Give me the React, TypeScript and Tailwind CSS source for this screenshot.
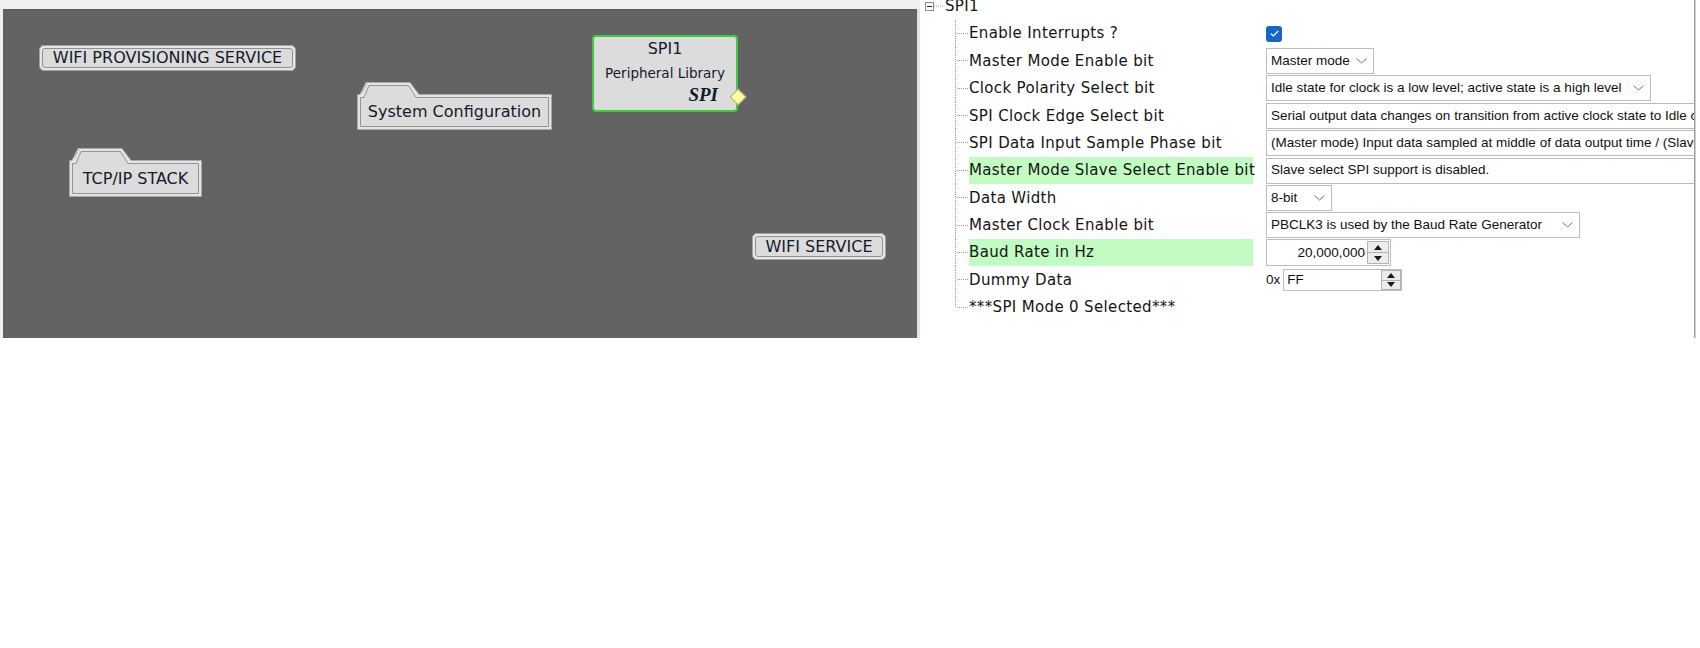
import React from "react";

function Pill({ label, className }: { label: string; className: string }) {
  return (
    <div className={`absolute rounded-[5px] border border-[#a3a3a3] bg-[#e6e6e6] p-[2px] ${className}`}>
      <div className="flex h-full items-center justify-center rounded-[3px] border border-[#919191] bg-[#dcdcdc] text-[16px] leading-none text-[#131a2c]">
        {label}
      </div>
    </div>
  );
}

function Folder({ label, w, h, className }: { label: string; w: number; h: number; className: string }) {
  const outer = `M0.5,${h - 0.5} V13.5 H3 L9,1.5 H53 L62,13.5 H${w - 0.5} V${h - 0.5} Z`;
  const inner = `M3.5,${h - 3.5} V16.5 H7 L12,4.5 H51.5 L59,16.5 H${w - 3.5} V${h - 3.5} Z`;
  return (
    <div className={`absolute ${className}`}>
      <svg className="absolute inset-0" width={w} height={h}>
        <path d={outer} fill="#e4e4e4" stroke="#a9a9a9" />
        <path d={inner} fill="#dcdcdc" stroke="#949494" />
        <line x1="5" y1="11" x2="10" y2="3" stroke="#8a8a8a" strokeDasharray="1 1" />
      </svg>
      <div className="relative flex h-full items-center justify-center pt-[13px] text-[16px] leading-none text-[#131a2c]">
        {label}
      </div>
    </div>
  );
}

function Connector({ last }: { last?: boolean }) {
  return (
    <svg width="49" height="27.4" className="shrink-0">
      <line x1="35.5" y1="0" x2="35.5" y2={last ? 14 : 27.4} stroke="#9a9a9a" strokeDasharray="1 1" />
      <line x1="37" y1="13.5" x2="48" y2="13.5" stroke="#9a9a9a" strokeDasharray="1 1" />
    </svg>
  );
}

function Chevron() {
  return (
    <svg width="11" height="6" className="shrink-0">
      <polyline points="0.5,0.5 5.5,5 10.5,0.5" fill="none" stroke="#707070" />
    </svg>
  );
}

function Combo({ text, className }: { text: string; className: string }) {
  return (
    <div className={`flex h-[26px] items-center justify-between border border-[#bcbcbc] bg-white pl-[4px] pr-[6px] ${className}`}>
      <span className="whitespace-nowrap">{text}</span>
      <Chevron />
    </div>
  );
}

function Field({ text }: { text: string }) {
  return (
    <div className="flex h-[26px] w-[460px] items-center border border-[#bcbcbc] bg-white pl-[4px]">
      <span className="whitespace-nowrap">{text}</span>
    </div>
  );
}

function SpinButtons({ className }: { className: string }) {
  return (
    <div className={`flex flex-col border border-[#b4b4b4] bg-[#ececec] ${className}`}>
      <div className="flex flex-1 items-center justify-center border-b border-[#b4b4b4]">
        <svg width="8" height="5"><polygon points="4,0 8,5 0,5" fill="#1a1a1a" /></svg>
      </div>
      <div className="flex flex-1 items-center justify-center">
        <svg width="8" height="5"><polygon points="0,0 8,0 4,5" fill="#1a1a1a" /></svg>
      </div>
    </div>
  );
}

function Row({ label, green, last, children }: { label: string; green?: boolean; last?: boolean; children?: React.ReactNode }) {
  return (
    <div className="flex h-[27.4px] items-stretch">
      <Connector last={last} />
      <div className={`flex w-[284px] shrink-0 items-center whitespace-nowrap ${green ? "bg-[#c2fcc2]" : ""}`}>{label}</div>
      <div className="ml-[13px] flex items-center font-['Liberation_Sans',sans-serif] text-[13.5px] tracking-normal text-[#111]">
        {children}
      </div>
    </div>
  );
}

export default function App() {
  return (
    <div className="h-[648px] w-[1700px] bg-white font-['DejaVu_Sans',sans-serif]">
      <div className="flex h-[338px]">
        {/* canvas */}
        <div className="flex w-[920px] shrink-0 bg-[#f0f0f0] pl-[3px] pt-[9px]">
          <div className="relative flex-1 border-t border-[#5a5a5a] bg-[#636363]">
            <Pill label="WIFI PROVISIONING SERVICE" className="left-[36px] top-[35px] h-[26px] w-[257px]" />
            <Folder label="TCP/IP STACK" w={133} h={50} className="left-[66px] top-[137px] h-[50px] w-[133px]" />
            <Folder label="System Configuration" w={195} h={49} className="left-[354px] top-[71px] h-[49px] w-[195px]" />
            <div className="absolute left-[589px] top-[25px] flex h-[77px] w-[146px] flex-col rounded-[4px] border-2 border-[#3ccb3c] bg-[#dcdcdc] text-[#131a2c]">
              <div className="mt-[3px] text-center text-[16px] leading-[18px]">SPI1</div>
              <div className="mt-[6px] text-center text-[13.5px] leading-[18px]">Peripheral Library</div>
              <div className="mt-[3px] pr-[18px] text-right font-['Liberation_Serif',serif] text-[19px] font-bold italic leading-[20px]">SPI</div>
              <div className="absolute right-[-8px] top-[54px] h-[12px] w-[12px] rotate-45 border border-[#a9a87a] bg-[#ffff9e]" />
            </div>
            <Pill label="WIFI SERVICE" className="left-[749px] top-[223px] h-[27px] w-[134px]" />
          </div>
          <div className="w-[3px] bg-[#dde4ec]" />
        </div>

        {/* properties tree */}
        <div className="w-[774px] shrink-0 overflow-hidden bg-white text-[15px] tracking-[0.35px] text-[#141414]">
          <div className="mt-[-7.5px]">
            <div className="flex h-[27.4px] items-center pl-[5px]">
              <div className="flex h-[9px] w-[9px] items-center justify-center border border-[#8c8c8c] bg-white">
                <div className="h-px w-[5px] bg-[#222]" />
              </div>
              <svg width="9" height="2" className="shrink-0">
                <line x1="0" y1="1" x2="9" y2="1" stroke="#9a9a9a" strokeDasharray="1 1" />
              </svg>
              <span className="ml-[2px]">SPI1</span>
            </div>
            <Row label="Enable Interrupts ?">
              <div className="flex h-[16px] w-[16px] items-center justify-center rounded-[3px] bg-[#1566c6]">
                <svg width="9" height="7"><polyline points="0.8,3.6 3.3,6 8.2,1" fill="none" stroke="#fff" strokeWidth="1.2" /></svg>
              </div>
            </Row>
            <Row label="Master Mode Enable bit">
              <Combo text="Master mode" className="w-[108px]" />
            </Row>
            <Row label="Clock Polarity Select bit">
              <Combo text="Idle state for clock is a low level; active state is a high level" className="w-[385px]" />
            </Row>
            <Row label="SPI Clock Edge Select bit">
              <Field text="Serial output data changes on transition from active clock state to Idle clock state" />
            </Row>
            <Row label="SPI Data Input Sample Phase bit">
              <Field text="(Master mode) Input data sampled at middle of data output time / (Slave mode) SMP bit must be cleared" />
            </Row>
            <Row label="Master Mode Slave Select Enable bit" green>
              <Field text="Slave select SPI support is disabled." />
            </Row>
            <Row label="Data Width">
              <Combo text="8-bit" className="w-[66px]" />
            </Row>
            <Row label="Master Clock Enable bit">
              <Combo text="PBCLK3 is used by the Baud Rate Generator" className="w-[314px]" />
            </Row>
            <Row label="Baud Rate in Hz" green>
              <div className="flex h-[27px] w-[125px] items-center border border-[#bcbcbc] bg-white pr-px">
                <span className="flex-1 pr-[2px] text-right">20,000,000</span>
                <SpinButtons className="h-[23px] w-[22px]" />
              </div>
            </Row>
            <Row label="Dummy Data">
              <span className="mr-[3px]">0x</span>
              <div className="flex h-[22px] w-[119px] items-center border border-[#bcbcbc] bg-white">
                <span className="flex-1 pl-[3px]">FF</span>
                <SpinButtons className="h-[20px] w-[20px]" />
              </div>
            </Row>
            <Row label="***SPI Mode 0 Selected***" last />
          </div>
        </div>

        <div className="w-px bg-[#9c9c9c]" />
        <div className="w-px bg-[#cfcfcf]" />
        <div className="flex-1 bg-white" />
      </div>
    </div>
  );
}
